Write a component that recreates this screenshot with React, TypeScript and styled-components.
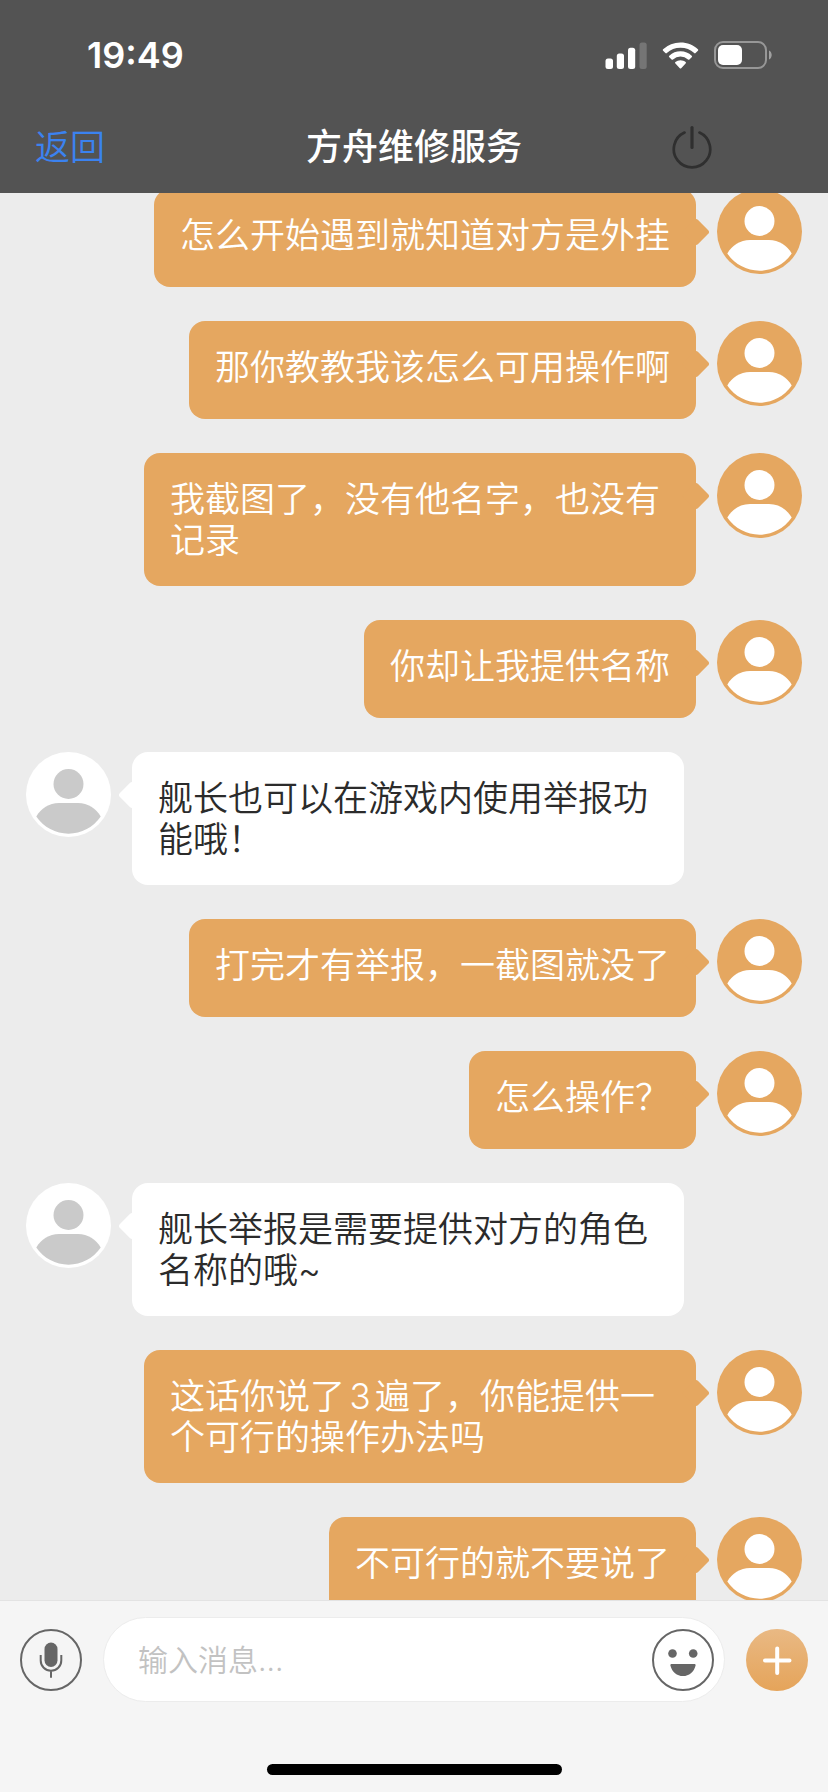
import { useLayoutEffect, useRef } from "react";
import styled, { createGlobalStyle, css } from "styled-components";

const ACCENT = "#e5a760";

const GlobalStyle = createGlobalStyle`
  *, *::before, *::after { box-sizing: border-box; }
  body {
    margin: 0;
    font-family: Inter, "Noto Sans CJK SC", sans-serif;
    background: #ececec;
  }
  button { padding: 0; border: 0; background: none; font: inherit; cursor: pointer; }
  svg { display: block; }
`;

const Screen = styled.div`
  display: flex;
  flex-direction: column;
  height: 100vh;
  background: #ececec;
`;

const Header = styled.header`
  flex: none;
  background: #535353;
  color: #fff;
`;

const StatusBar = styled.div`
  display: flex;
  justify-content: space-between;
  align-items: center;
  height: 110px;
  padding: 0 56px 0 87px;
`;

const Clock = styled.time`
  font-size: 36px;
  font-weight: 600;
  line-height: 44px;
`;

const StatusIcons = styled.div`
  display: flex;
  align-items: center;
  gap: 15px;
`;

const NavBar = styled.nav`
  display: grid;
  grid-template-columns: 1fr auto 1fr;
  align-items: center;
  height: 83px;
  padding: 0 35px 9px;
`;

const BackButton = styled.button`
  justify-self: start;
  color: #3b82f0;
  font-size: 35px;
  font-weight: 350;
  line-height: 42px;
`;

const Title = styled.h1`
  margin: 0;
  font-size: 36px;
  font-weight: 500;
  line-height: 42px;
`;

const PowerButton = styled.button`
  justify-self: end;
  margin-right: 80px;
`;

const History = styled.main`
  flex: 1;
  min-height: 0;
  overflow-y: auto;
  scrollbar-width: none;
`;

const MessageList = styled.ol`
  display: flex;
  flex-direction: column;
  gap: 34px;
  margin: 0;
  padding: 34px 26px;
  list-style: none;
`;

const MessageRow = styled.li<{ $mine: boolean }>`
  display: flex;
  flex-direction: ${(p) => (p.$mine ? "row-reverse" : "row")};
  align-items: flex-start;
  gap: 21px;
`;

const Bubble = styled.p<{ $mine: boolean }>`
  position: relative;
  max-width: calc(100% - 224px);
  min-height: 98px;
  margin: 0;
  padding: 26px 26px 25px;
  border-radius: 16px;
  font-size: 35px;
  font-weight: 350;
  line-height: 41px;
  text-autospace: normal;
  background: ${(p) => (p.$mine ? ACCENT : "#fff")};
  color: ${(p) => (p.$mine ? "#fff" : "#2b2b2b")};

  &::after {
    content: "";
    position: absolute;
    top: 33px;
    width: 20px;
    height: 20px;
    border-radius: 3px;
    background: inherit;
    transform: rotate(45deg);
    ${(p) => (p.$mine ? css`right: -10px;` : css`left: -10px;`)}
  }
`;

const AvatarArt = styled.svg`
  flex: none;
  width: 85px;
  height: 85px;
`;

const Composer = styled.footer`
  flex: none;
  display: flex;
  flex-direction: column;
  align-items: center;
  gap: 62px;
  padding: 16px 20px 17px;
  border-top: 1px solid #e3e3e3;
  background: #f5f5f5;
`;

const ComposerRow = styled.form`
  display: flex;
  align-items: center;
  gap: 21px;
  width: 100%;
`;

const RoundButton = styled.button`
  flex: none;
  width: 62px;
  height: 62px;
`;

const Field = styled.div`
  flex: 1;
  min-width: 0;
  display: flex;
  align-items: center;
  height: 85px;
  padding: 0 10px 0 34px;
  border: 1px solid #ececec;
  border-radius: 43px;
  background: #fff;
`;

const TextInput = styled.input`
  flex: 1;
  min-width: 0;
  padding: 0;
  border: 0;
  outline: 0;
  background: none;
  color: #2b2b2b;
  font: inherit;
  font-size: 30px;
  font-weight: 350;
  line-height: 42px;

  &::placeholder { color: #c2c2c2; opacity: 1; }
`;

const HomeIndicator = styled.div`
  width: 295px;
  height: 11px;
  border-radius: 6px;
  background: #000;
`;

function Signal() {
  return (
    <svg width="42" height="27" viewBox="0 0 42 27" fill="#fff" aria-hidden="true">
      <rect x="0.500" y="16.500" width="7.500" height="10.500" rx="2.500" />
      <rect x="11.800" y="11.500" width="7.200" height="15.500" rx="2.500" />
      <rect x="23" y="5.800" width="7.200" height="21.200" rx="2.500" />
      <rect x="34.500" y="0.500" width="7.200" height="26.500" rx="2.500" fillOpacity="0.2" />
    </svg>
  );
}

function Wifi() {
  return (
    <svg width="37" height="27" viewBox="0 0 37 27" fill="#fff" aria-hidden="true">
      <path d="M18.500.5C25.400.5 31.500 3 35.900 7.300a1 1 0 0 1 0 1.500l-2.300 2.300a1 1 0 0 1-1.400 0A20 20 0 0 0 18.500 5.700 20 20 0 0 0 4.800 11.100a1 1 0 0 1-1.400 0L1.100 8.800a1 1 0 0 1 0-1.500A25.500 25.500 0 0 1 18.500.5Z" />
      <path d="M18.500 9.300c4.500 0 8.300 1.700 11.200 4.400a1 1 0 0 1 0 1.500l-2.300 2.300a1 1 0 0 1-1.400 0 11.200 11.200 0 0 0-15 0 1 1 0 0 1-1.400 0l-2.300-2.300a1 1 0 0 1 0-1.500A16.600 16.600 0 0 1 18.500 9.300Z" />
      <path d="M18.500 18.300c2 0 3.800.7 5.100 1.800a.9.900 0 0 1 0 1.400l-4.400 4.700a1 1 0 0 1-1.400 0l-4.400-4.700a.9.900 0 0 1 0-1.400A8 8 0 0 1 18.500 18.300Z" />
    </svg>
  );
}

function Battery() {
  return (
    <svg width="58" height="28" viewBox="0 0 58 28" aria-hidden="true">
      <rect x="1" y="1" width="51" height="26" rx="8" fill="none" stroke="#fff" strokeOpacity="0.4" strokeWidth="2" />
      <rect x="4" y="4" width="24" height="20" rx="5" fill="#fff" />
      <path d="M55 9.500c3.600 1.600 3.600 7.400 0 9Z" fill="#fff" fillOpacity="0.45" />
    </svg>
  );
}

function Power() {
  return (
    <svg width="42" height="44" viewBox="0 0 42 44" fill="none" stroke="#2f2f2f" strokeWidth="2.700" strokeLinecap="round" aria-hidden="true">
      <path d="M13.500 7.600a18.200 18.200 0 1 0 15 0" />
      <path d="M21 2.500v20" strokeWidth="3.200" />
    </svg>
  );
}

function Avatar({ mine }: { mine: boolean }) {
  return (
    <AvatarArt viewBox="0 0 85 85" role="img" aria-label={mine ? "我" : "客服"}>
      <circle cx="42.500" cy="42.500" r="42.500" fill={mine ? ACCENT : "#fff"} />
      <g fill={mine ? "#fff" : "#cacaca"}>
        <circle cx="42.500" cy="32" r="15" />
        <path d="M10.300 64.500C15 56.500 23 51 33 51h19c10 0 18 5.500 22.700 13.500A39.300 39.300 0 0 1 42.500 81.800 39.300 39.300 0 0 1 10.300 64.500Z" />
      </g>
    </AvatarArt>
  );
}

function Microphone() {
  return (
    <svg width="62" height="62" viewBox="0 0 62 62" fill="none" stroke="#666" strokeWidth="2" aria-hidden="true">
      <circle cx="31" cy="31" r="30" />
      <rect x="24.500" y="13.500" width="13" height="24.500" rx="6.500" fill="#666" stroke="none" />
      <path d="M20.700 26v5.500a10.300 10.300 0 0 0 20.600 0V26M31 41.800v7" />
    </svg>
  );
}

function Smile() {
  return (
    <svg width="62" height="62" viewBox="0 0 62 62" fill="#666" aria-hidden="true">
      <circle cx="31" cy="31" r="30" fill="none" stroke="#666" strokeWidth="2" />
      <circle cx="20.500" cy="24.500" r="4.300" />
      <circle cx="41.200" cy="24.500" r="4.300" />
      <path d="M19.500 35h23c.8 0 1.300.7 1.100 1.400C42 43 37 47 31 47s-11-4-12.600-10.600c-.2-.7.300-1.400 1.100-1.400Z" />
    </svg>
  );
}

function Plus() {
  return (
    <svg width="62" height="62" viewBox="0 0 62 62" aria-hidden="true">
      <defs>
        <linearGradient id="plus-fill" x1="0" y1="0" x2="0" y2="1">
          <stop offset="0" stopColor="#e9b984" />
          <stop offset="1" stopColor="#e5a45a" />
        </linearGradient>
      </defs>
      <circle cx="31" cy="31" r="31" fill="url(#plus-fill)" />
      <path d="M19 31.500h24.500M31.200 19.500v24.500" stroke="#fff" strokeWidth="4" strokeLinecap="round" />
    </svg>
  );
}

const messages = [
  { mine: true, text: "怎么开始遇到就知道对方是外挂" },
  { mine: true, text: "那你教教我该怎么可用操作啊" },
  { mine: true, text: "我截图了，没有他名字，也没有记录" },
  { mine: true, text: "你却让我提供名称" },
  { mine: false, text: "舰长也可以在游戏内使用举报功能哦！" },
  { mine: true, text: "打完才有举报，一截图就没了" },
  { mine: true, text: "怎么操作？" },
  { mine: false, text: "舰长举报是需要提供对方的角色名称的哦~" },
  { mine: true, text: "这话你说了3遍了，你能提供一个可行的操作办法吗" },
  { mine: true, text: "不可行的就不要说了" },
];

// The conversation opens slightly scrolled, past the list's top padding.
const INITIAL_SCROLL = 38;

export default function App() {
  const history = useRef<HTMLElement>(null);

  useLayoutEffect(() => {
    if (history.current) history.current.scrollTop = INITIAL_SCROLL;
  }, []);

  return (
    <Screen>
      <GlobalStyle />
      <Header>
        <StatusBar>
          <Clock>19:49</Clock>
          <StatusIcons>
            <Signal />
            <Wifi />
            <Battery />
          </StatusIcons>
        </StatusBar>
        <NavBar>
          <BackButton type="button">返回</BackButton>
          <Title>方舟维修服务</Title>
          <PowerButton type="button" aria-label="结束会话">
            <Power />
          </PowerButton>
        </NavBar>
      </Header>
      <History ref={history}>
        <MessageList>
          {messages.map((m) => (
            <MessageRow key={m.text} $mine={m.mine}>
              <Avatar mine={m.mine} />
              <Bubble $mine={m.mine}>{m.text}</Bubble>
            </MessageRow>
          ))}
        </MessageList>
      </History>
      <Composer>
        <ComposerRow onSubmit={(e) => e.preventDefault()}>
          <RoundButton type="button" aria-label="语音">
            <Microphone />
          </RoundButton>
          <Field>
            <TextInput type="text" aria-label="输入消息" placeholder="输入消息..." />
            <RoundButton type="button" aria-label="表情">
              <Smile />
            </RoundButton>
          </Field>
          <RoundButton type="button" aria-label="更多">
            <Plus />
          </RoundButton>
        </ComposerRow>
        <HomeIndicator />
      </Composer>
    </Screen>
  );
}
